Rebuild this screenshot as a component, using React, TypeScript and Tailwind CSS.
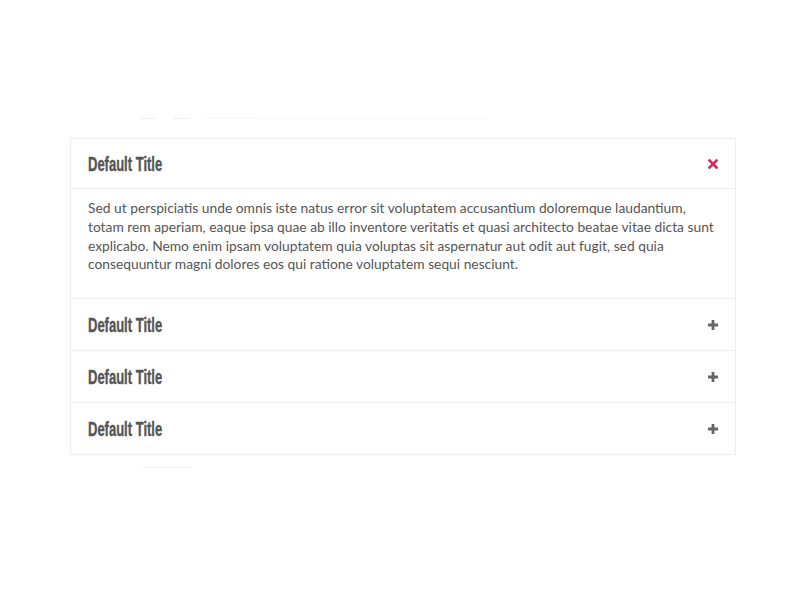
import React from "react";

const titleFont = { fontFamily: '"Liberation Sans", Arial, sans-serif' };

function Plus() {
  return (
    <svg width="10" height="10" viewBox="0 0 10 10" className="block">
      <path d="M3.6 0h2.8v3.6H10v2.8H6.4V10H3.6V6.4H0V3.6h3.6z" fill="#666666" />
    </svg>
  );
}

function Cross() {
  return (
    <svg width="10" height="10" viewBox="0 0 10 10" className="block">
      <path d="M1.5 1.5L8.5 8.5M8.5 1.5L1.5 8.5" stroke="#d12a5c" strokeWidth="2.6" strokeLinecap="square" />
    </svg>
  );
}

function Header({ open }: { open?: boolean }) {
  return (
    <div className={`flex items-center justify-between pl-[17px] pr-[17px] ${open ? "h-[49px]" : "h-[51px]"}`}>
      <span
        className="text-[20px] font-bold text-[#555555] inline-block origin-left scale-x-[0.65] [-webkit-text-stroke:0.4px_#555555]"
        style={titleFont}
      >
        Default Title
      </span>
      {open ? <Cross /> : <Plus />}
    </div>
  );
}

export default function App() {
  return (
    <div className="w-[800px] h-[600px] bg-white relative">
      <div className="absolute left-[140px] top-[118px] flex items-center gap-[16px] opacity-60">
        <div className="w-[17px] h-[1px] bg-[#dbeaf7]" />
        <div className="w-[17px] h-[1px] bg-[#dbeaf7]" />
        <div className="w-[280px] h-[1px] bg-[#f1f1f1]" />
      </div>
      <div className="pt-[138px] px-[70px]">
        <div className="w-[666px] border border-[#eeeeee]">
          <Header open />
          <div
            className="border-t border-[#eeeeee] pl-[17px] pr-[14px] pt-[10px] pb-[24px] text-[13.8px] leading-[18.8px] text-[#555555]"
            style={{ fontFamily: 'Lato, "Open Sans", sans-serif' }}
          >
            Sed ut perspiciatis unde omnis iste natus error sit voluptatem accusantium doloremque laudantium, totam rem aperiam, eaque ipsa quae ab illo inventore veritatis et quasi architecto beatae vitae dicta sunt explicabo. Nemo enim ipsam voluptatem quia voluptas sit aspernatur aut odit aut fugit, sed quia consequuntur magni dolores eos qui ratione voluptatem sequi nesciunt.
          </div>
          <div className="border-t border-[#eeeeee]">
            <Header />
          </div>
          <div className="border-t border-[#eeeeee]">
            <Header />
          </div>
          <div className="border-t border-[#eeeeee]">
            <Header />
          </div>
        </div>
        <div className="ml-[70px] mt-[12px] w-[52px] h-[1px] bg-[#eef5fb]" />
      </div>
    </div>
  );
}
